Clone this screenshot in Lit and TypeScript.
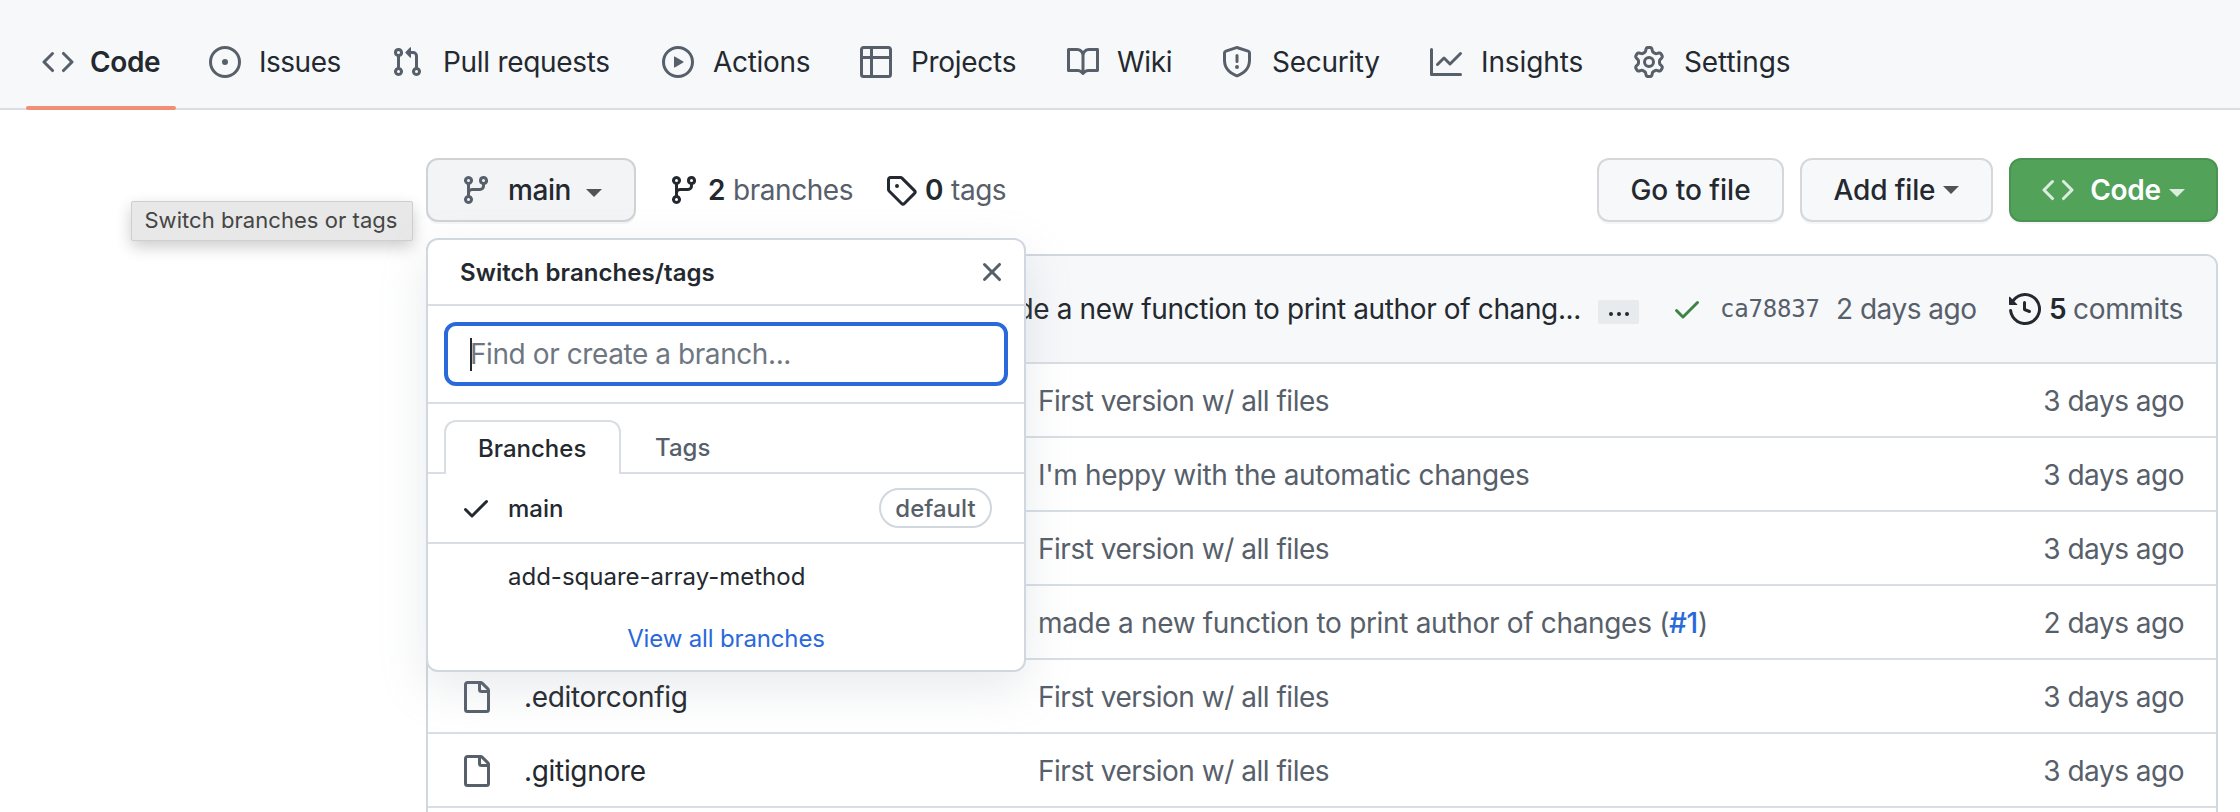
import { LitElement, html, css, svg } from "lit";
import { customElement, property } from "lit/decorators.js";

const ICONS: Record<string, string> = {
  code: "M4.72 3.22a.75.75 0 011.06 1.06L2.06 8l3.72 3.72a.75.75 0 11-1.06 1.06L.47 8.53a.75.75 0 010-1.06l4.25-4.25zm6.56 0a.75.75 0 10-1.06 1.06L13.94 8l-3.72 3.72a.75.75 0 101.06 1.06l4.25-4.25a.75.75 0 000-1.06l-4.25-4.25z",
  issue: "M8 9.5a1.5 1.5 0 100-3 1.5 1.5 0 000 3zM8 0a8 8 0 100 16A8 8 0 008 0zM1.5 8a6.5 6.5 0 1113 0 6.5 6.5 0 01-13 0z",
  pull: "M7.177 3.073L9.573.677A.25.25 0 0110 .854v4.792a.25.25 0 01-.427.177L7.177 3.427a.25.25 0 010-.354zM3.75 2.5a.75.75 0 100 1.5.75.75 0 000-1.5zm-2.25.75a2.25 2.25 0 113 2.122v5.256a2.251 2.251 0 11-1.5 0V5.372A2.25 2.25 0 011.5 3.25zM11 2.5h-1V4h1a1 1 0 011 1v5.628a2.251 2.251 0 101.5 0V5A2.5 2.5 0 0011 2.5zm1 10.25a.75.75 0 111.5 0 .75.75 0 01-1.5 0zM3.75 12a.75.75 0 100 1.5.75.75 0 000-1.5z",
  play: "M1.5 8a6.5 6.5 0 1113 0 6.5 6.5 0 01-13 0zM8 0a8 8 0 100 16A8 8 0 008 0zM6.379 5.227A.25.25 0 006 5.442v5.117a.25.25 0 00.379.214l4.264-2.559a.25.25 0 000-.428L6.379 5.227z",
  table: "M0 1.75C0 .784.784 0 1.75 0h12.5C15.216 0 16 .784 16 1.75v12.5A1.75 1.75 0 0114.25 16H1.75A1.75 1.75 0 010 14.25V1.75zM1.5 6.5v7.75c0 .138.112.25.25.25H5v-8H1.5zM6.5 6.5v8h7.75a.25.25 0 00.25-.25V6.5h-8zM14.5 5V1.75a.25.25 0 00-.25-.25H6.5V5h8zM5 5V1.5H1.75a.25.25 0 00-.25.25V5H5z",
  book: "M0 1.75A.75.75 0 01.75 1h4.253c1.227 0 2.317.59 3 1.501A3.744 3.744 0 0111.006 1h4.245a.75.75 0 01.75.75v10.5a.75.75 0 01-.75.75h-4.507a2.25 2.25 0 00-1.591.659l-.622.621a.75.75 0 01-1.06 0l-.622-.621A2.25 2.25 0 005.258 13H.75a.75.75 0 01-.75-.75V1.75zm8.755 3a2.25 2.25 0 012.25-2.25H14.5v9h-3.757c-.71 0-1.4.201-1.992.572l.004-7.322zm-1.504 7.324l.004-5.073-.002-2.253A2.25 2.25 0 005.003 2.5H1.5v9h3.757a3.75 3.75 0 011.994.574z",
  shield: "M7.467.133a1.75 1.75 0 011.066 0l5.25 1.68A1.75 1.75 0 0115 3.48V7c0 1.566-.32 3.182-1.303 4.682-.983 1.498-2.585 2.813-5.032 3.855a1.7 1.7 0 01-1.33 0c-2.447-1.042-4.049-2.357-5.032-3.855C1.32 10.182 1 8.566 1 7V3.48a1.75 1.75 0 011.217-1.667l5.25-1.68zm.61 1.429a.25.25 0 00-.153 0l-5.25 1.68a.25.25 0 00-.174.238V7c0 1.358.275 2.666 1.057 3.86.784 1.194 2.121 2.34 4.366 3.297a.2.2 0 00.154 0c2.245-.956 3.582-2.104 4.366-3.298C13.225 9.666 13.5 8.36 13.5 7V3.48a.25.25 0 00-.174-.237l-5.25-1.68zM9 10.5a1 1 0 11-2 0 1 1 0 012 0zm-.25-5.75a.75.75 0 10-1.5 0v3a.75.75 0 001.5 0v-3z",
  graph: "M1.5 1.75a.75.75 0 00-1.5 0v12.5c0 .414.336.75.75.75h14.5a.75.75 0 000-1.5H1.5V1.75zm14.28 2.53a.75.75 0 00-1.06-1.06L10 7.94 7.53 5.47a.75.75 0 00-1.06 0L3.22 8.72a.75.75 0 001.06 1.06L7 7.06l2.47 2.47a.75.75 0 001.06 0l5.25-5.25z",
  gear: "M7.429 1.525a6.593 6.593 0 011.142 0c.036.003.108.036.137.146l.289 1.105c.147.56.55.967.997 1.189.174.086.341.183.501.29.417.278.97.423 1.53.27l1.102-.303c.11-.03.175.016.195.046.219.31.41.641.573.989.014.031.022.11-.059.19l-.815.806c-.411.406-.562.957-.53 1.456a4.588 4.588 0 010 .582c-.032.499.119 1.05.53 1.456l.815.806c.08.08.073.159.059.19a6.494 6.494 0 01-.573.99c-.02.029-.086.074-.195.045l-1.103-.303c-.559-.153-1.112-.008-1.529.27-.16.107-.327.204-.5.29-.449.222-.851.628-.998 1.189l-.289 1.105c-.029.11-.101.143-.137.146a6.613 6.613 0 01-1.142 0c-.036-.003-.108-.037-.137-.146l-.289-1.105c-.147-.56-.55-.967-.997-1.189a4.502 4.502 0 01-.501-.29c-.417-.278-.97-.423-1.53-.27l-1.102.303c-.11.03-.175-.016-.195-.046a6.492 6.492 0 01-.573-.989c-.014-.031-.022-.11.059-.19l.815-.806c.411-.406.562-.957.53-1.456a4.587 4.587 0 010-.582c.032-.499-.119-1.05-.53-1.456l-.815-.806c-.08-.08-.073-.159-.059-.19a6.44 6.44 0 01.573-.99c.02-.029.086-.075.195-.045l1.103.303c.559.153 1.112.008 1.529-.27.16-.107.327-.204.5-.29.449-.222.851-.628.998-1.189l.289-1.105c.029-.11.101-.143.137-.146zM8 0c-.236 0-.47.01-.701.03-.743.065-1.29.615-1.458 1.261l-.29 1.106c-.017.066-.078.158-.211.224a5.994 5.994 0 00-.668.386c-.123.082-.233.09-.3.071L3.27 2.776c-.644-.177-1.392.02-1.82.63a7.977 7.977 0 00-.704 1.217c-.315.675-.111 1.422.363 1.891l.815.806c.05.048.098.147.088.294a6.084 6.084 0 000 .772c.01.147-.038.246-.088.294l-.815.806c-.474.469-.678 1.216-.363 1.891.2.428.436.835.704 1.218.428.609 1.176.806 1.82.63l1.103-.303c.066-.019.176-.011.299.071.213.143.436.272.668.386.133.066.194.158.212.224l.289 1.106c.169.646.715 1.196 1.458 1.26a8.094 8.094 0 001.402 0c.743-.064 1.29-.614 1.458-1.26l.29-1.106c.017-.066.078-.158.211-.224a5.98 5.98 0 00.668-.386c.123-.082.233-.09.3-.071l1.102.302c.644.177 1.392-.02 1.82-.63.268-.382.505-.789.704-1.217.315-.675.111-1.422-.364-1.891l-.814-.806c-.05-.048-.098-.147-.088-.294a6.1 6.1 0 000-.772c-.01-.147.039-.246.088-.294l.814-.806c.475-.469.679-1.216.364-1.891a7.992 7.992 0 00-.704-1.218c-.428-.609-1.176-.806-1.82-.63l-1.103.303c-.066.019-.176.011-.299-.071a5.991 5.991 0 00-.668-.386c-.133-.066-.194-.158-.212-.224L10.16 1.29C9.99.645 9.444.095 8.701.031A8.094 8.094 0 008 0zm1.5 8a1.5 1.5 0 11-3 0 1.5 1.5 0 013 0zM11 8a3 3 0 11-6 0 3 3 0 016 0z",
  branch: "M11.75 2.5a.75.75 0 100 1.5.75.75 0 000-1.5zm-2.25.75a2.25 2.25 0 113 2.122V6A2.5 2.5 0 0110 8.5H6a1 1 0 00-1 1v1.128a2.251 2.251 0 11-1.5 0V5.372a2.25 2.25 0 111.5 0v1.836A2.492 2.492 0 016 7h4a1 1 0 001-1v-.628A2.25 2.25 0 019.5 3.25zM4.25 12a.75.75 0 100 1.5.75.75 0 000-1.5zM3.5 3.25a.75.75 0 111.5 0 .75.75 0 01-1.5 0z",
  tag: "M2.5 7.775V2.75a.25.25 0 01.25-.25h5.025a.25.25 0 01.177.073l6.25 6.25a.25.25 0 010 .354l-5.025 5.025a.25.25 0 01-.354 0l-6.25-6.25a.25.25 0 01-.073-.177zm-1.5 0V2.75C1 1.784 1.784 1 2.75 1h5.025c.464 0 .91.184 1.238.513l6.25 6.25a1.75 1.75 0 010 2.474l-5.026 5.026a1.75 1.75 0 01-2.474 0l-6.25-6.25A1.75 1.75 0 011 7.775zM6 5a1 1 0 100 2 1 1 0 000-2z",
  x: "M3.72 3.72a.75.75 0 011.06 0L8 6.94l3.22-3.22a.75.75 0 111.06 1.06L9.06 8l3.22 3.22a.75.75 0 11-1.06 1.06L8 9.06l-3.22 3.22a.75.75 0 01-1.06-1.06L6.94 8 3.72 4.78a.75.75 0 010-1.06z",
  check: "M13.78 4.22a.75.75 0 010 1.06l-7.25 7.25a.75.75 0 01-1.06 0L2.22 9.28a.75.75 0 011.06-1.06L6 10.94l6.72-6.72a.75.75 0 011.06 0z",
  history: "M1.643 3.143L.427 1.927A.25.25 0 000 2.104V5.75c0 .138.112.25.25.25h3.646a.25.25 0 00.177-.427L2.715 4.215a6.5 6.5 0 11-1.18 4.458.75.75 0 10-1.493.154 8.001 8.001 0 101.6-5.684zM7.75 4a.75.75 0 01.75.75v2.992l2.028.812a.75.75 0 01-.557 1.392l-2.5-1A.75.75 0 017 8.25v-3.5A.75.75 0 017.75 4z",
  file: "M3.75 1.5a.25.25 0 00-.25.25v12.5c0 .138.112.25.25.25h9.5a.25.25 0 00.25-.25V6h-2.75A1.75 1.75 0 019 4.25V1.5H3.75zm6.75.062V4.25c0 .138.112.25.25.25h2.688a.252.252 0 00-.011-.013l-2.914-2.914a.272.272 0 00-.013-.011zM2 1.75C2 .784 2.784 0 3.75 0h6.586c.464 0 .909.184 1.237.513l2.914 2.914c.329.328.513.773.513 1.237v9.586A1.75 1.75 0 0113.25 16h-9.5A1.75 1.75 0 012 14.25V1.75z",
};

@customElement("oct-icon")
class OctIcon extends LitElement {
  @property() name = "code";

  static styles = css`
    :host { display: block; flex: none; width: 32px; height: 32px; }
    .glyph { display: block; width: 100%; height: 100%; fill: currentColor; }
  `;

  render() {
    return html`<svg class="glyph" viewBox="0 0 16 16" aria-hidden="true">
      ${svg`<path fill-rule="evenodd" d=${ICONS[this.name]}></path>`}
    </svg>`;
  }
}

@customElement("repo-nav")
class RepoNav extends LitElement {
  static styles = css`
    :host { display: block; }
    .nav {
      box-sizing: border-box; height: 110px; padding: 14px 0 0 26px;
      background: #f6f8fa; border-bottom: 2px solid #d8dee4;
      display: grid; grid-template-columns: 167px 182px 271px 198px 207px 154px 209px 203px 190px;
    }
    .item {
      box-sizing: border-box; height: 96px; padding: 0 16px; display: flex; align-items: center; gap: 19px;
      justify-self: start; color: #24292f; font-size: 28px; letter-spacing: -0.3px; white-space: nowrap;
    }
    .item:nth-child(2) { gap: 18px; letter-spacing: -0.5px; }
    .item:nth-child(3) { gap: 20px; }
    .item:nth-child(6) { gap: 18px; }
    .item:nth-child(n + 8) { letter-spacing: -0.1px; }
    .item oct-icon { color: #57606a; }
    .item.active { position: relative; width: 150px; gap: 16px; font-weight: 600; letter-spacing: -0.4px; }
    .item.active::after {
      content: ""; position: absolute; left: 0; right: 0; bottom: 0; height: 4px;
      border-radius: 2px; background: #f18f75;
    }
  `;

  items = [
    ["code", "Code"], ["issue", "Issues"], ["pull", "Pull requests"], ["play", "Actions"], ["table", "Projects"],
    ["book", "Wiki"], ["shield", "Security"], ["graph", "Insights"], ["gear", "Settings"],
  ];

  render() {
    return html`<nav class="nav">
      ${this.items.map(([icon, label], i) => html`
        <a class=${i === 0 ? "item active" : "item"}><oct-icon name=${icon}></oct-icon><span>${label}</span></a>`)}
    </nav>`;
  }
}

@customElement("branch-menu")
class BranchMenu extends LitElement {
  static styles = css`
    :host { display: block; }
    .menu {
      box-sizing: border-box; width: 600px; height: 434px; background: #fff; border: 2px solid #d0d7de;
      border-radius: 12px; box-shadow: 0 16px 48px rgba(140, 149, 159, 0.2);
      font-size: 24px; color: #24292f; overflow: hidden;
    }
    .head {
      box-sizing: border-box; height: 66px; padding: 0 16px 0 32px; display: flex; align-items: center;
      justify-content: space-between; border-bottom: 2px solid #d8dee4; font-weight: 600; letter-spacing: 0.07px;
    }
    .head oct-icon { color: #57606a; }
    .search { box-sizing: border-box; height: 98px; padding: 16px; border-bottom: 2px solid #d8dee4; }
    .field {
      box-sizing: border-box; height: 64px; border: 4px solid #2a69d9; border-radius: 12px; padding-left: 22px;
      display: flex; align-items: center; font-size: 28px; letter-spacing: -0.42px; color: #6e7781;
    }
    .caret { width: 2px; height: 33px; background: #24292f; margin-right: -2px; }
    .tabs {
      height: 54px; padding: 16px 16px 0; display: flex; box-shadow: inset 0 -2px #d8dee4; font-weight: 500;
    }
    .tab {
      box-sizing: border-box; height: 54px; display: flex; align-items: center; padding: 1px 34px 0; color: #57606a;
    }
    .tab.on {
      width: 177px; border: 2px solid #d8dee4; border-bottom: 0; border-radius: 12px 12px 0 0; background: #fff;
      color: #24292f; padding: 0 32px;
    }
    .row { height: 68px; padding: 0 32px; display: grid; grid-template-columns: 48px 1fr auto; align-items: center; }
    .row.first { border-bottom: 2px solid #d8dee4; }
    .row.other { height: 65px; }
    .name { font-weight: 500; }
    .pill {
      box-sizing: border-box; height: 40px; width: 113px; border: 2px solid #d0d7de; border-radius: 20px;
      color: #57606a; font-weight: 500; display: flex; align-items: center; justify-content: center;
    }
    .plain { grid-column: 2; }
    .all {
      height: 58px; display: flex; align-items: center; justify-content: center; color: #2a69d9;
      letter-spacing: -0.15px;
    }
  `;

  render() {
    return html`<div class="menu">
      <div class="head"><span>Switch branches/tags</span><oct-icon name="x"></oct-icon></div>
      <div class="search"><div class="field"><i class="caret"></i><span>Find or create a branch...</span></div></div>
      <div class="tabs"><div class="tab on">Branches</div><div class="tab">Tags</div></div>
      <div class="row first"><oct-icon name="check"></oct-icon><span class="name">main</span><span class="pill">default</span></div>
      <div class="row other"><span class="plain">add-square-array-method</span></div>
      <div class="all">View all branches</div>
    </div>`;
  }
}

@customElement("file-table")
class FileTable extends LitElement {
  static styles = css`
    :host { display: block; }
    .box {
      box-sizing: border-box; width: 1792px; height: 700px; border: 2px solid #d0d7de; border-radius: 12px;
      overflow: hidden; background: #fff; font-size: 28px; letter-spacing: -0.32px; color: #57606a;
    }
    .latest {
      box-sizing: border-box; height: 108px; padding-right: 32px; background: #f6f8fa;
      border-bottom: 2px solid #d8dee4; display: grid; align-items: center;
      grid-template-columns: minmax(0, 1fr) 73px 49px 116px 173px 40px 24px 111px; white-space: nowrap;
    }
    .msg { padding-right: 17px; display: flex; justify-content: flex-end; color: #24292f; letter-spacing: -0.37px; }
    .more {
      width: 41px; height: 24px; background: #e7ebee; border-radius: 2px; display: flex; align-items: center;
      justify-content: center; gap: 4px; margin-top: 6px;
    }
    .more i { width: 4px; height: 4px; border-radius: 50%; background: #24292f; margin-top: 3px; }
    .ok { color: #3d8443; }
    .sha { font-family: "DejaVu Sans Mono", monospace; font-size: 24px; letter-spacing: -0.2px; }
    .dark { color: #24292f; }
    .num { color: #24292f; font-weight: 600; }
    .row {
      box-sizing: border-box; height: 74px; padding: 2px 32px 0; border-bottom: 2px solid #d8dee4;
      display: grid; grid-template-columns: 64px 514px 1fr auto; align-items: center; white-space: nowrap;
    }
    .name { color: #24292f; }
    .msg-cell { color: #57606a; letter-spacing: -0.32px; }
    .msg-cell.tight { letter-spacing: -0.48px; }
    .when { letter-spacing: -0.5px; }
    .link { color: #2a69d9; font-weight: 500; }
  `;

  rows: [string, string, string][] = [
    [".github", "First version w/ all files", "3 days ago"],
    ["public", "I'm heppy with the automatic changes", "3 days ago"],
    ["src", "First version w/ all files", "3 days ago"],
    ["test", "made a new function to print author of changes (#1)", "2 days ago"],
    [".editorconfig", "First version w/ all files", "3 days ago"],
    [".gitignore", "First version w/ all files", "3 days ago"],
  ];

  message(text: string) {
    const at = text.indexOf("#1");
    return at < 0 ? text : html`${text.slice(0, at)}<a class="link">#1</a>${text.slice(at + 2)}`;
  }

  render() {
    return html`<div class="box">
      <div class="latest">
        <span class="msg">made a new function to print author of chang...</span>
        <span class="more"><i></i><i></i><i></i></span>
        <oct-icon class="ok" name="check"></oct-icon>
        <span class="sha">ca78837</span>
        <span class="when">2 days ago</span>
        <oct-icon class="dark" name="history"></oct-icon>
        <span class="num">5</span>
        <span>commits</span>
      </div>
      ${this.rows.map(([name, msg, when], i) => html`<div class="row">
        ${i > 3 ? html`<oct-icon name="file"></oct-icon><span class="name">${name}</span>` : html`<span></span><span></span>`}
        <span class=${msg.startsWith("First") ? "msg-cell tight" : "msg-cell"}>${this.message(msg)}</span>
        <span class="when">${when}</span>
      </div>`)}
    </div>`;
  }
}

@customElement("app-root")
class AppRoot extends LitElement {
  static styles = css`
    :host {
      display: block; height: 812px; overflow: hidden; background: #fff;
      font-family: Inter, "Liberation Sans", sans-serif; font-size: 28px; color: #24292f;
    }
    .page { padding: 48px 22px 0 426px; display: flex; flex-direction: column; gap: 32px; }
    .bar { display: flex; height: 64px; align-items: center; white-space: nowrap; }
    .anchor { position: relative; z-index: 2; }
    .menu { position: absolute; left: 0; top: 80px; }
    .tip {
      position: absolute; left: -295px; top: 43px; box-sizing: border-box; width: 282px; height: 40px;
      background: #e8e8e8; border: 1px solid #cfcfcf; border-radius: 2px; color: #454545; font-size: 22px;
      letter-spacing: 0.05px; display: flex; align-items: center; justify-content: center; padding: 0 2px 2px 0;
      box-shadow: 0 6px 16px rgba(0, 0, 0, 0.2);
    }
    .btn {
      box-sizing: border-box; height: 64px; display: flex; align-items: center; justify-content: center;
      background: #f6f8fa; border: 2px solid #d5d8da; border-radius: 12px; font-weight: 500;
      box-shadow: 0 2px 0 rgba(31, 35, 40, 0.04);
    }
    .btn.ref {
      width: 210px; background: #f3f4f6; border-color: #d0d3d6; padding: 0 32px; justify-content: flex-start;
      letter-spacing: -0.4px;
    }
    .ref oct-icon { color: #57606a; margin-right: 16px; }
    .tri { border: 8px solid transparent; border-bottom: 0; border-top-color: #505459; }
    .ref .tri { margin: 6px 0 0 auto; }
    .stat { display: flex; align-items: center; color: #57606a; letter-spacing: -0.45px; }
    .stat oct-icon { color: #24292f; margin-right: 8px; }
    .stat b { color: #24292f; font-weight: 600; margin-right: 8px; }
    .stat.branches { margin-left: 32px; width: 217px; }
    .actions { margin-left: auto; display: flex; gap: 16px; }
    .go { width: 187px; }
    .add { width: 193px; gap: 8px; letter-spacing: -0.15px; }
    .btn.clone { width: 209px; background: #52a25a; border-color: #4a9352; color: #fff; font-weight: 600; gap: 8px; letter-spacing: -0.3px; }
    .clone oct-icon { color: #dcecde; margin-right: 8px; }
    .clone .tri { border-top-color: #dcecde; margin-top: 6px; }
  `;

  render() {
    return html`
      <repo-nav></repo-nav>
      <main class="page">
        <div class="bar">
          <div class="anchor">
            <div class="btn ref"><oct-icon name="branch"></oct-icon><span>main</span><i class="tri"></i></div>
            <div class="tip">Switch branches or tags</div>
            <branch-menu class="menu"></branch-menu>
          </div>
          <div class="stat branches"><oct-icon name="branch"></oct-icon><b>2</b><span>branches</span></div>
          <div class="stat"><oct-icon name="tag"></oct-icon><b>0</b><span>tags</span></div>
          <div class="actions">
            <div class="btn go">Go to file</div>
            <div class="btn add"><span>Add file</span><i class="tri"></i></div>
            <div class="btn clone"><oct-icon name="code"></oct-icon><span>Code</span><i class="tri"></i></div>
          </div>
        </div>
        <file-table></file-table>
      </main>`;
  }
}
